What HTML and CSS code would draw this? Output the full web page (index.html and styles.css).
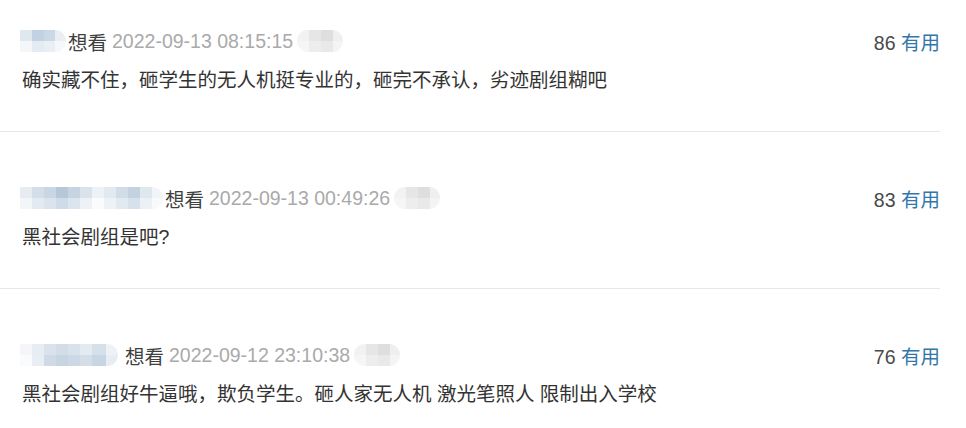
FILE: index.html
```html
<!DOCTYPE html>
<html lang="zh-CN">
<head>
    <meta charset="UTF-8">
    <meta name="viewport" content="width=device-width, initial-scale=1.0">
    <title>短评</title>
    <link rel="stylesheet" href="styles.css">
</head>
<body>
    <div class="comments">
        <div class="comment">
            <div class="comment-info">
                <div class="meta">
                    <span class="blur-name name-a"></span>
                    <span class="status">想看</span>
                    <span class="time">2022-09-13 08:15:15</span>
                    <span class="blur-tag"></span>
                </div>
                <div class="votes"><span class="vote-count">86</span> <a href="#" class="vote-link">有用</a></div>
            </div>
            <p class="comment-text">确实藏不住，砸学生的无人机挺专业的，砸完不承认，劣迹剧组糊吧</p>
        </div>

        <div class="comment">
            <div class="comment-info">
                <div class="meta">
                    <span class="blur-name name-b"></span>
                    <span class="status">想看</span>
                    <span class="time">2022-09-13 00:49:26</span>
                    <span class="blur-tag"></span>
                </div>
                <div class="votes"><span class="vote-count">83</span> <a href="#" class="vote-link">有用</a></div>
            </div>
            <p class="comment-text">黑社会剧组是吧?</p>
        </div>

        <div class="comment">
            <div class="comment-info">
                <div class="meta">
                    <span class="blur-name name-c"></span>
                    <span class="status">想看</span>
                    <span class="time">2022-09-12 23:10:38</span>
                    <span class="blur-tag"></span>
                </div>
                <div class="votes"><span class="vote-count">76</span> <a href="#" class="vote-link">有用</a></div>
            </div>
            <p class="comment-text">黑社会剧组好牛逼哦，欺负学生。砸人家无人机 激光笔照人 限制出入学校</p>
        </div>
    </div>
</body>
</html>
```

FILE: styles.css
```css
body {
    margin: 0;
    padding: 0;
    background-color: #ffffff;
    font-family: "Liberation Sans", "Noto Sans CJK SC", sans-serif;
    color: #494949;
}

.comments {
    width: 940px;
}

.comment {
    padding: 53px 0 38px 0;
    border-bottom: 1px solid #e8e8e8;
}

.comment:first-child {
    padding-top: 28px;
}

.comment-info {
    display: flex;
    justify-content: space-between;
    align-items: center;
    height: 26px;
    font-size: 19.5px;
}

.meta {
    display: flex;
    align-items: center;
    padding-left: 20px;
}

.status {
    color: #3f3f3f;
    margin-left: 2px;
}

.time {
    color: #aaaaaa;
    margin-left: 5px;
}

.blur-name {
    display: inline-block;
    height: 22px;
    border-radius: 0 11px 11px 0;
    background-repeat: no-repeat;
    background-size: 100% 11px, 100% 11px;
    background-position: 0 0, 0 11px;
}

.name-a {
    width: 46px;
    background-image:
        linear-gradient(90deg, #dfe7ef 0 12px, #c2d2e2 12px 24px, #cbd8e5 24px 35px, #e9eef4 35px),
        linear-gradient(90deg, #f4f6f9 0 12px, #e4ebf2 12px 24px, #eaeff5 24px 35px, #f5f7fa 35px);
}

.name-b {
    width: 143px;
    background-image:
        linear-gradient(90deg, #e6ecf2 0 12px, #d3dee8 12px 24px, #c9d6e3 24px 36px, #b5c8da 36px 48px, #c6d4e2 48px 60px, #d9e3ec 60px 72px, #eef2f6 72px 84px, #e1e9f1 84px 96px, #d0dce8 96px 108px, #c2d2e1 108px 120px, #dfe7ef 120px 132px, #f2f5f8 132px),
        linear-gradient(90deg, #f3f6f9 0 12px, #e3eaf1 12px 24px, #dbe4ed 24px 36px, #cfdbe7 36px 48px, #dce5ee 48px 60px, #eef2f6 60px 72px, #fafbfc 72px 84px, #eef2f6 84px 96px, #e1e9f1 96px 108px, #d7e1eb 108px 120px, #edf1f5 120px 132px, #f8f9fb 132px);
}

.name-c {
    width: 98px;
    margin-right: 5px;
    background-image:
        linear-gradient(90deg, #f4f6f9 0 12px, #e7edf3 12px 24px, #dae3ec 24px 36px, #d2dde8 36px 48px, #d8e2eb 48px 60px, #e3eaf1 60px 72px, #d6e0ea 72px 86px, #eef2f6 86px),
        linear-gradient(90deg, #fafbfc 0 12px, #e9eef4 12px 24px, #cfdae6 24px 36px, #c7d5e3 36px 48px, #ccd8e5 48px 60px, #d3dee8 60px 72px, #c8d5e3 72px 86px, #e8edf3 86px);
}

.blur-tag {
    display: inline-block;
    width: 46px;
    height: 22px;
    margin-left: 4px;
    border-radius: 11px;
    background-repeat: no-repeat;
    background-size: 100% 11px, 100% 11px;
    background-position: 0 0, 0 11px;
    background-image:
        linear-gradient(90deg, #f2f2f2 0 12px, #e6e6e6 12px 24px, #dedede 24px 36px, #efefef 36px),
        linear-gradient(90deg, #f6f6f6 0 12px, #ededed 12px 24px, #e9e9e9 24px 36px, #f4f4f4 36px);
}

.votes {
    color: #494949;
}

.vote-link {
    color: #3377aa;
    text-decoration: none;
}

.comment-text {
    margin: 13px 0 0 0;
    padding-left: 22px;
    font-size: 19.5px;
    line-height: 26px;
    color: #333333;
}
```
